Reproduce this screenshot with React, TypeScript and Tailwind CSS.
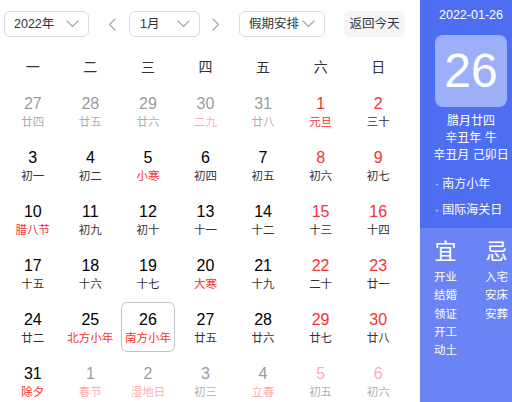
import React from "react";

type Cell = {
  n: number;
  l: string;
  numRed?: boolean;
  lunarRed?: boolean;
  other?: boolean;
  selected?: boolean;
};

const rows: Cell[][] = [
  [
    { n: 27, l: "廿四", other: true },
    { n: 28, l: "廿五", other: true },
    { n: 29, l: "廿六", other: true },
    { n: 30, l: "二九", other: true, lunarRed: true },
    { n: 31, l: "廿八", other: true },
    { n: 1, l: "元旦", numRed: true, lunarRed: true },
    { n: 2, l: "三十", numRed: true },
  ],
  [
    { n: 3, l: "初一" },
    { n: 4, l: "初二" },
    { n: 5, l: "小寒", lunarRed: true },
    { n: 6, l: "初四" },
    { n: 7, l: "初五" },
    { n: 8, l: "初六", numRed: true },
    { n: 9, l: "初七", numRed: true },
  ],
  [
    { n: 10, l: "腊八节", lunarRed: true },
    { n: 11, l: "初九" },
    { n: 12, l: "初十" },
    { n: 13, l: "十一" },
    { n: 14, l: "十二" },
    { n: 15, l: "十三", numRed: true },
    { n: 16, l: "十四", numRed: true },
  ],
  [
    { n: 17, l: "十五" },
    { n: 18, l: "十六" },
    { n: 19, l: "十七" },
    { n: 20, l: "大寒", lunarRed: true },
    { n: 21, l: "十九" },
    { n: 22, l: "二十", numRed: true },
    { n: 23, l: "廿一", numRed: true },
  ],
  [
    { n: 24, l: "廿二" },
    { n: 25, l: "北方小年", lunarRed: true },
    { n: 26, l: "南方小年", lunarRed: true, selected: true },
    { n: 27, l: "廿五" },
    { n: 28, l: "廿六" },
    { n: 29, l: "廿七", numRed: true },
    { n: 30, l: "廿八", numRed: true },
  ],
  [
    { n: 31, l: "除夕", lunarRed: true },
    { n: 1, l: "春节", other: true, lunarRed: true },
    { n: 2, l: "湿地日", other: true, lunarRed: true },
    { n: 3, l: "初三", other: true },
    { n: 4, l: "立春", other: true, lunarRed: true },
    { n: 5, l: "初五", other: true, numRed: true },
    { n: 6, l: "初六", other: true, numRed: true },
  ],
];

const weekdays = ["一", "二", "三", "四", "五", "六", "日"];

function Chevron() {
  return (
    <svg width="13" height="8" viewBox="0 0 13 8" fill="none">
      <polyline points="1,1 6.5,6.5 12,1" stroke="#a8a8b0" strokeWidth="1.3" strokeLinecap="round" strokeLinejoin="round" />
    </svg>
  );
}

function Arrow({ dir }: { dir: "l" | "r" }) {
  return (
    <svg width="8" height="13" viewBox="0 0 8 13" fill="none">
      {dir === "l" ? (
        <polyline points="7,1 1.5,6.5 7,12" stroke="#a8a8b0" strokeWidth="1.3" strokeLinecap="round" strokeLinejoin="round" />
      ) : (
        <polyline points="1,1 6.5,6.5 1,12" stroke="#a8a8b0" strokeWidth="1.3" strokeLinecap="round" strokeLinejoin="round" />
      )}
    </svg>
  );
}

export default function App() {
  return (
    <div className="w-[512px] h-[402px] flex overflow-hidden bg-white font-['Liberation_Sans','Noto_Sans_CJK_SC',sans-serif]">
      <div className="w-[420px] shrink-0 pl-[4px] pt-[11px]">
        <div className="flex items-center h-[26px] text-[12.5px] text-[#333]">
          <div className="w-[85px] h-[26px] border border-[#d8dae0] rounded-[6px] flex items-center justify-between pl-[9px] pr-[9px]">
            <span>2022年</span>
            <Chevron />
          </div>
          <div className="ml-[15px] w-[16px] flex justify-center">
            <Arrow dir="l" />
          </div>
          <div className="ml-[9px] w-[71px] h-[26px] border border-[#d8dae0] rounded-[6px] flex items-center justify-between pl-[10px] pr-[9px]">
            <span>1月</span>
            <Chevron />
          </div>
          <div className="ml-[8px] w-[16px] flex justify-center">
            <Arrow dir="r" />
          </div>
          <div className="ml-[15px] w-[86px] h-[26px] border border-[#d8dae0] rounded-[6px] flex items-center justify-between pl-[9px] pr-[9px]">
            <span>假期安排</span>
            <Chevron />
          </div>
          <div className="ml-[19px] w-[61px] h-[26px] rounded-[6px] bg-[#f5f5f6] flex items-center justify-center">
            返回今天
          </div>
        </div>

        <div className="grid grid-cols-7 w-[403px] mt-[15px] h-[30px] items-center text-[14px] text-[#333]">
          {weekdays.map((w) => (
            <div key={w} className="text-center">
              {w}
            </div>
          ))}
        </div>

        <div className="grid grid-cols-7 w-[403px] mt-[4px] gap-y-[4px]">
          {rows.flat().map((c, i) => (
            <div key={i} className={c.other ? "opacity-40" : ""}>
              <div
                className={
                  "mx-auto w-[54px] h-[50px] flex flex-col items-center pt-[7px] rounded-[6px] border " +
                  (c.selected ? "border-[#c4c4cc]" : "border-transparent")
                }
              >
                <div className={"text-[16px] leading-[20px] " + (c.numRed ? "text-[#f73131]" : "text-black")}>
                  {c.n}
                </div>
                <div className={"text-[11.5px] leading-[16px] " + (c.lunarRed ? "text-[#f73131]" : "text-[#333]")}>
                  {c.l}
                </div>
              </div>
            </div>
          ))}
        </div>
      </div>

      <div className="w-[102px] shrink-0 flex flex-col text-white">
        <div className="h-[228px] bg-[#4e6ef2] flex flex-col items-center pt-[7px]">
          <div className="text-[12.5px] leading-[16px]">2022-01-26</div>
          <div className="mt-[12px] w-[72px] h-[72px] rounded-[8px] bg-white/45 flex items-center justify-center text-[48px] leading-none">
            26
          </div>
          <div className="mt-[6px] text-[12px] leading-[17px] text-center">
            <div>腊月廿四</div>
            <div>辛丑年 牛</div>
            <div>辛丑月 己卯日</div>
          </div>
          <div className="self-start pl-[15px] mt-[12px] text-[12px] leading-[17px] flex flex-col gap-[9px]">
            <div>· 南方小年</div>
            <div>· 国际海关日</div>
          </div>
        </div>
        <div className="flex-1 bg-[#6a85f3] grid grid-cols-2 pt-[12px] content-start">
          <div className="flex flex-col items-center">
            <div className="text-[22px] leading-[24px]">宜</div>
            <div className="mt-[4px] text-[11.5px] leading-[18.3px] flex flex-col items-center">
              <div>开业</div>
              <div>结婚</div>
              <div>领证</div>
              <div>开工</div>
              <div>动土</div>
            </div>
          </div>
          <div className="flex flex-col items-center">
            <div className="text-[22px] leading-[24px]">忌</div>
            <div className="mt-[4px] text-[11.5px] leading-[18.3px] flex flex-col items-center">
              <div>入宅</div>
              <div>安床</div>
              <div>安葬</div>
            </div>
          </div>
        </div>
      </div>
    </div>
  );
}
